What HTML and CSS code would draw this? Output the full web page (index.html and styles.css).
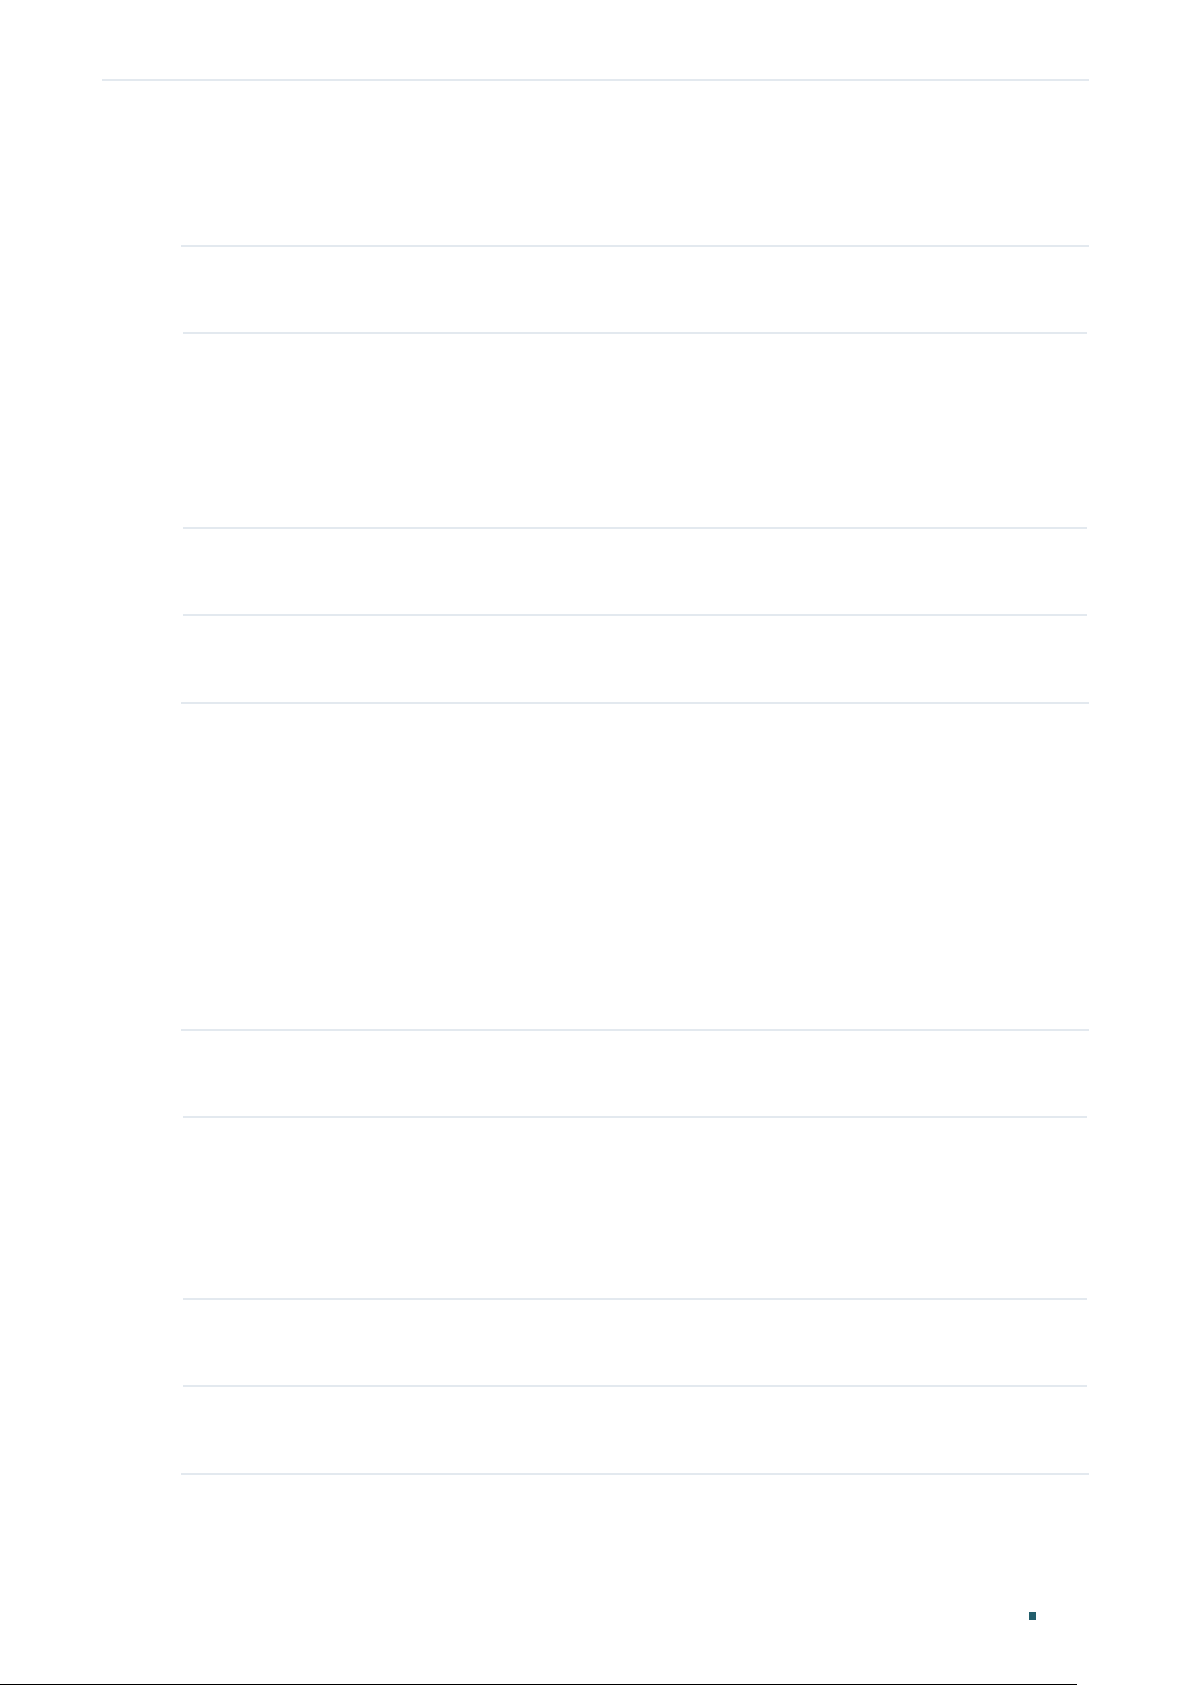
FILE: index.html
```html
<!DOCTYPE html>
<html lang="en">
<head>
  <meta charset="UTF-8">
  <meta name="viewport" content="width=device-width, initial-scale=1.0">
  <title>Page</title>
  <link rel="stylesheet" href="styles.css">
</head>
<body>
  <div class="page">

    <!-- Header rule -->
    <div class="header-rule"></div>

    <!-- First table -->
    <div class="tbl tbl-first">
      <div class="row r85"></div>
      <div class="row r193"></div>
      <div class="row r85"></div>
      <div class="row last r86"></div>
    </div>

    <!-- Second table -->
    <div class="tbl tbl-second">
      <div class="row r85"></div>
      <div class="row r180"></div>
      <div class="row r85"></div>
      <div class="row last r86"></div>
    </div>

    <!-- Footer marker -->
    <div class="footer">
      <span class="marker"></span>
    </div>

    <div class="bottom-rule"></div>
  </div>
</body>
</html>
```

FILE: styles.css
```css
/* Global Styles */
body {
  margin: 0;
  padding: 0;
  background: #fff;
  font-family: 'Liberation Sans', Arial, sans-serif;
}

.page {
  width: 1192px;
  height: 1685px;
  overflow: hidden;
  display: flex;
  flex-direction: column;
}

.header-rule {
  margin-top: 79px;
  margin-left: 102px;
  width: 987px;
  height: 2px;
  background: #e3e9ef;
}

/* Tables */
.tbl {
  margin-left: 181px;
  width: 908px;
  border-top: 2px solid #e3e9ef;
  border-bottom: 2px solid #e3e9ef;
}

.tbl-first {
  margin-top: 164px;
}

.tbl-second {
  margin-top: 325px;
}

.row {
  margin: 0 2px;
  border-bottom: 2px solid #e3e9ef;
}

.row.last {
  border-bottom: none;
}

.r85 { height: 85px; }
.r86 { height: 86px; }
.r180 { height: 180px; }
.r193 { height: 193px; }

/* Footer */
.footer {
  margin-top: 137px;
  padding-left: 1029px;
  height: 8px;
}

.marker {
  display: block;
  width: 7px;
  height: 8px;
  background: #235e6c;
}

.bottom-rule {
  margin-top: 64px;
  width: 1077px;
  height: 1px;
  flex-shrink: 0;
  background: #000;
}
```
